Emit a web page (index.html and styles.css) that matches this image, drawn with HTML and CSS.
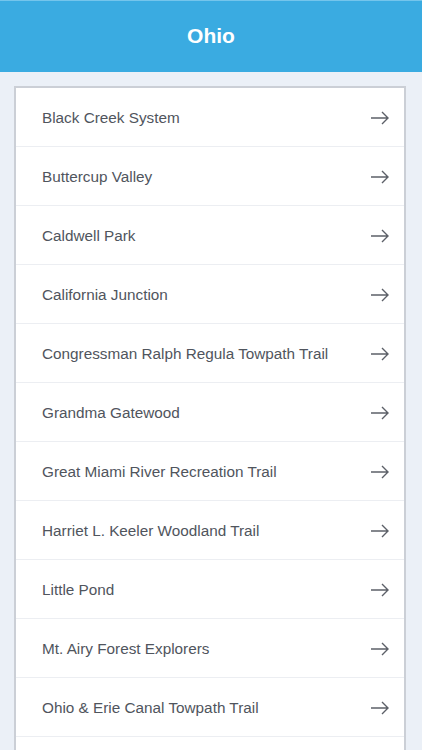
FILE: index.html
```html
<!DOCTYPE html>
<html lang="en">

<head>
    <meta charset="UTF-8">
    <meta name="viewport" content="width=device-width, initial-scale=1.0">
    <title>Ohio</title>
    <link rel="stylesheet" href="styles.css">
</head>

<body>
    <header class="top-bar">
        <h1>Ohio</h1>
    </header>

    <ul class="trail-list">
        <li class="trail"><span>Black Creek System</span><svg class="arrow" viewBox="0 0 18 14"><path d="M0 7H17M11 1L17 7L11 13"/></svg></li>
        <li class="trail"><span>Buttercup Valley</span><svg class="arrow" viewBox="0 0 18 14"><path d="M0 7H17M11 1L17 7L11 13"/></svg></li>
        <li class="trail"><span>Caldwell Park</span><svg class="arrow" viewBox="0 0 18 14"><path d="M0 7H17M11 1L17 7L11 13"/></svg></li>
        <li class="trail"><span>California Junction</span><svg class="arrow" viewBox="0 0 18 14"><path d="M0 7H17M11 1L17 7L11 13"/></svg></li>
        <li class="trail"><span>Congressman Ralph Regula Towpath Trail</span><svg class="arrow" viewBox="0 0 18 14"><path d="M0 7H17M11 1L17 7L11 13"/></svg></li>
        <li class="trail"><span>Grandma Gatewood</span><svg class="arrow" viewBox="0 0 18 14"><path d="M0 7H17M11 1L17 7L11 13"/></svg></li>
        <li class="trail"><span>Great Miami River Recreation Trail</span><svg class="arrow" viewBox="0 0 18 14"><path d="M0 7H17M11 1L17 7L11 13"/></svg></li>
        <li class="trail"><span>Harriet L. Keeler Woodland Trail</span><svg class="arrow" viewBox="0 0 18 14"><path d="M0 7H17M11 1L17 7L11 13"/></svg></li>
        <li class="trail"><span>Little Pond</span><svg class="arrow" viewBox="0 0 18 14"><path d="M0 7H17M11 1L17 7L11 13"/></svg></li>
        <li class="trail"><span>Mt. Airy Forest Explorers</span><svg class="arrow" viewBox="0 0 18 14"><path d="M0 7H17M11 1L17 7L11 13"/></svg></li>
        <li class="trail"><span>Ohio &amp; Erie Canal Towpath Trail</span><svg class="arrow" viewBox="0 0 18 14"><path d="M0 7H17M11 1L17 7L11 13"/></svg></li>
        <li class="trail"></li>
    </ul>
</body>

</html>
```

FILE: styles.css
```css
body {
    font-family: "Liberation Sans", Arial, sans-serif;
    margin: 0;
    padding: 0;
    background-color: #ebf0f7;
    overflow: hidden;
}

.top-bar {
    height: 71px;
    background-color: #3aabe1;
    border-top: 1px solid #74c5ec;
    display: flex;
    align-items: center;
    justify-content: center;
}

.top-bar h1 {
    margin: 0 0 2px;
    color: #fff;
    font-size: 21px;
    font-weight: bold;
}

.trail-list {
    list-style: none;
    margin: 14px 16px 0 14px;
    padding: 0;
    background-color: #fff;
    border: 2px solid #cbcfd6;
    border-bottom: none;
}

.trail {
    height: 59px;
    box-sizing: border-box;
    display: flex;
    align-items: center;
    justify-content: space-between;
    padding: 2px 15px 0 26px;
    border-bottom: 1px solid #eceef2;
    color: #50555d;
    font-size: 15.3px;
}

.arrow {
    width: 18px;
    height: 14px;
    fill: none;
    stroke: #5c6068;
    stroke-width: 1.4;
}
```
